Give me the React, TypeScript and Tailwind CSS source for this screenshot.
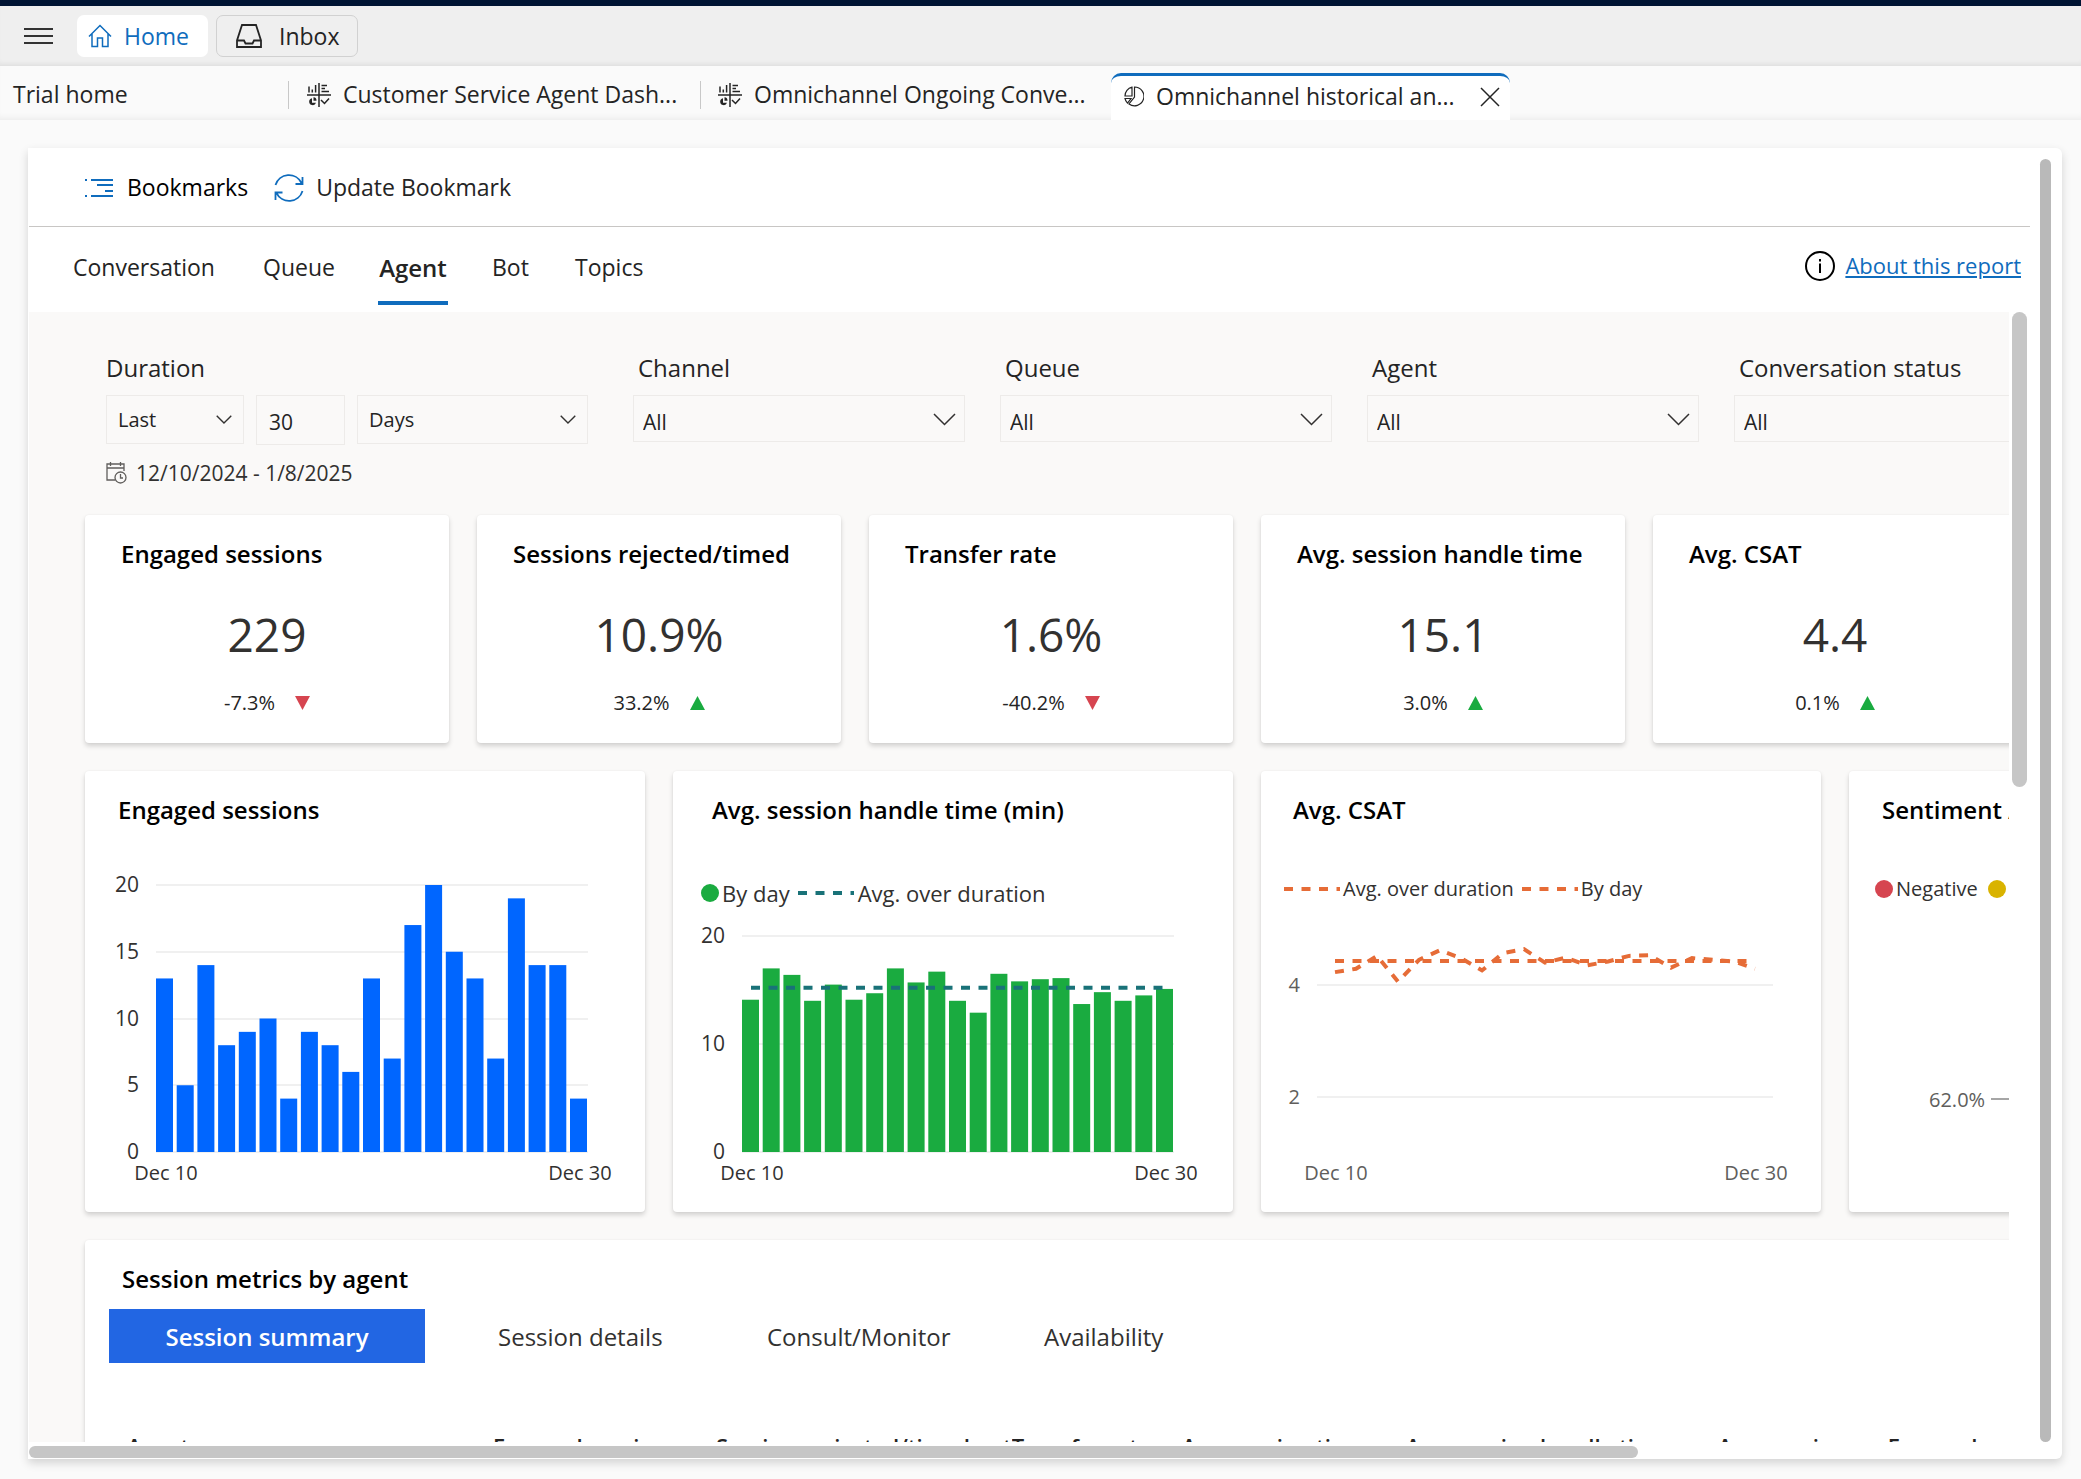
import { ReactNode } from 'react'

const sessionsPerDay = [13, 5, 14, 8, 9, 10, 4, 9, 8, 6, 13, 7, 17, 20, 15, 13, 7, 19, 14, 14, 4]
const handleTimePerDay = [
  14.1, 17, 16.4, 14, 15.5, 14.1, 14.7, 17, 15.7, 16.7, 14, 12.9, 16.5, 15.8, 16, 16.1, 13.7, 14.8, 14, 14.5, 15.1,
]
const csatPerDay = [
  4.23, 4.29, 4.52, 4.06, 4.45, 4.62, 4.48, 4.26, 4.57, 4.64, 4.4, 4.49, 4.35, 4.42, 4.52, 4.53, 4.31, 4.48, 4.45,
  4.42, 4.29,
]

const kpis = [
  { title: 'Engaged sessions', value: '229', delta: '-7.3%', up: false },
  { title: 'Sessions rejected/timed', value: '10.9%', delta: '33.2%', up: true },
  { title: 'Transfer rate', value: '1.6%', delta: '-40.2%', up: false },
  { title: 'Avg. session handle time', value: '15.1', delta: '3.0%', up: true },
  { title: 'Avg. CSAT', value: '4.4', delta: '0.1%', up: true },
]

const columns = [
  { label: 'Agent', width: 366 },
  { label: 'Engaged sessions', width: 223 },
  { label: 'Sessions rejected/timed out', width: 292 },
  { label: 'Transfer rate', width: 170 },
  { label: 'Avg. session time', width: 224 },
  { label: 'Avg. session handle time', width: 312 },
  { label: 'Avg. session', width: 170 },
  { label: 'Engaged', width: 200 },
]

function HomeIcon() {
  return (
    <svg width="24" height="24" viewBox="0 0 24 24" fill="none" stroke="#0f6cbd" strokeWidth="1.5">
      <path d="M1 12.5 12 1.5l11 11M4 10v12.5h5.5V14h5v8.500H20V10" />
    </svg>
  )
}

function InboxIcon() {
  return (
    <svg width="26" height="24" viewBox="0 0 26 24" fill="none" stroke="#242424" strokeWidth="1.8">
      <path d="M6 1h14l5 15.500V23H1v-6.500L6 1ZM1 16.500h7l1.500 3h7l1.500-3h7" />
    </svg>
  )
}

function DashboardIcon() {
  return (
    <svg width="24" height="24" viewBox="0 0 24 24" fill="none" stroke="#242424" strokeWidth="1.5">
      <path d="M12 0v24M0 12h24" />
      <path d="M2 9.500V3.500M5.300 9.500v-3M8.600 9.500V2M14.500 2.500H20M14.500 5.500h3.500M14.500 8.500H22" />
      <path d="M5 15.200a3.500 3.500 0 1 0 4 4.500H5v-4.500Z" fill="#242424" stroke="none" />
      <path d="M6.500 14.200a3.400 3.400 0 0 1 3 3.600h-3v-3.600Z" fill="#242424" stroke="none" />
      <path d="m14 17 3.500 3.500 4.500-5" />
    </svg>
  )
}

function PieIcon() {
  return (
    <svg width="20" height="21" viewBox="0 0 20 21" fill="none" stroke="#242424" strokeWidth="1.2">
      <path d="M8 1.2A9 9 0 0 0 1 10h7V1.2ZM10.500 1a9.400 9.400 0 1 1-5.500 17l5.500-7V1ZM1 12.500h6L3.500 17A9 9 0 0 1 1 12.500Z" />
    </svg>
  )
}

function BookmarksIcon() {
  return (
    <svg width="28" height="20" viewBox="0 0 28 20" fill="none" stroke="#0f6cbd" strokeWidth="2">
      <path d="M0 2h2M6 2h22M12 7h16M20 13h8M0 18h2M6 18h22" />
    </svg>
  )
}

function RefreshIcon() {
  return (
    <svg width="30" height="30" viewBox="0 0 30 30" fill="none" stroke="#0f6cbd" strokeWidth="1.8">
      <path d="M1.500 12A14 14 0 0 1 27.500 10M28.500 4v7h-7M28.500 18A14 14 0 0 1 2.500 20M1.500 27v-7.500h7" />
    </svg>
  )
}

function CalendarIcon() {
  return (
    <svg width="21" height="22" viewBox="0 0 21 22" fill="none" stroke="#605e5c" strokeWidth="1.3">
      <path d="M9 18H1V2h17v7M1 6h17M4.500 0v4M14.500 0v4" />
      <circle cx="14.500" cy="15.500" r="5.500" />
      <path d="M14.500 12v4H17" />
    </svg>
  )
}

function InfoIcon() {
  return (
    <svg width="30" height="30" viewBox="0 0 30 30" fill="none" stroke="#000" strokeWidth="2">
      <circle cx="15" cy="15" r="14" />
      <path d="M15 12.500v9.500M15 8v2.500" />
    </svg>
  )
}

function Triangle({ up }: { up: boolean }) {
  return (
    <svg width="15" height="14" viewBox="0 0 15 14">
      {up ? <path d="M0 14h15L7.500 0Z" fill="#1aab40" /> : <path d="M0 0h15L7.500 14Z" fill="#d64550" />}
    </svg>
  )
}

function Dashes({ color }: { color: string }) {
  return (
    <svg width="56" height="4" viewBox="0 0 56 4">
      <path d="M0 2h56" stroke={color} strokeWidth="4" strokeDasharray="9 8.500" />
    </svg>
  )
}

interface PickerProps {
  id: string
  value: string
  label?: string
  small?: boolean
  className: string
}

function Picker({ id, value, label, small, className }: PickerProps) {
  return (
    <div className={className}>
      <div className="relative">
        <select
          id={id}
          aria-label={label}
          className={
            small
              ? 'block h-[49px] w-full appearance-none border border-[#edebe9] bg-transparent pt-px pl-[11px] text-[20px] outline-none'
              : 'block h-[47px] w-full appearance-none border border-[#edebe9] bg-transparent pt-2 pl-[9px] text-[21px] outline-none'
          }
        >
          <option>{value}</option>
        </select>
        <svg
          className={small ? 'pointer-events-none absolute top-5 right-3' : 'pointer-events-none absolute top-[18px] right-[9px]'}
          width={small ? 16 : 23}
          height={small ? 9 : 13}
          viewBox="0 0 23 13"
          fill="none"
          stroke="#323130"
          strokeWidth={small ? 2 : 1.5}
        >
          <path d="m1 1 10.500 10.500L22 1" />
        </svg>
      </div>
    </div>
  )
}

function Filter({ id, label }: { id: string; label: string }) {
  return (
    <div className="w-[332px] shrink-0">
      <label htmlFor={id} className="block h-[43px] pl-[5px] text-[24px] leading-8">
        {label}
      </label>
      <Picker id={id} value="All" className="w-full" />
    </div>
  )
}

function Card({ title, className, children }: { title: string; className: string; children: ReactNode }) {
  return (
    <section
      className={`shrink-0 overflow-hidden rounded-[4px] bg-white shadow-[0_3px_5px_rgba(0,0,0,0.16),0_0_2px_rgba(0,0,0,0.06)] ${className}`}
    >
      <h3 className="text-[24px] leading-8 font-semibold whitespace-nowrap text-black">{title}</h3>
      {children}
    </section>
  )
}

interface BarChartProps {
  values: number[]
  ticks: number[]
  color: string
  left: number
  top: number
  height: number
  average?: number
}

function BarChart({ values, ticks, color, left, top, height, average }: BarChartProps) {
  const base = height - 60
  const y = (v: number) => base - (v / 20) * (base - top)
  return (
    <svg className="block" width="560" height={height} fontSize="21" fill="#323130">
      {ticks.map((t) => (
        <g key={t}>
          <path d={`M${left} ${Math.round(y(t))}h432`} stroke="#f0f0f0" strokeWidth="2" />
          <text x={left - 17} y={y(t) + 7} textAnchor="end">
            {t}
          </text>
        </g>
      ))}
      {values.map((v, i) => (
        <rect key={i} x={left + i * 20.7} y={y(v)} width="17" height={base - y(v)} fill={color} />
      ))}
      {average && (
        <path d={`M${left + 9} ${y(average)}h412`} stroke="#197278" strokeWidth="4" strokeDasharray="9 8.500" />
      )}
      <text x={left + 10} y={base + 28} fontSize="20" textAnchor="middle">
        Dec 10
      </text>
      <text x={left + 424} y={base + 28} fontSize="20" textAnchor="middle">
        Dec 30
      </text>
    </svg>
  )
}

function CsatChart() {
  const y = (v: number) => 82 + (4 - v) * 56
  const line = csatPerDay.map((v, i) => `${74 + i * 21},${y(v)}`).join(' ')
  return (
    <svg className="block" width="560" height="309" fontSize="20" fill="#605e5c">
      {[4, 2].map((t) => (
        <g key={t}>
          <path d={`M56 ${y(t)}h456`} stroke="#f0f0f0" strokeWidth="2" />
          <text x="39" y={y(t) + 7} textAnchor="end">
            {t}
          </text>
        </g>
      ))}
      <g fill="none" stroke="#e66c37" strokeWidth="4" strokeDasharray="9 8.500">
        <path d={`M74 ${y(4.43)}h412`} />
        <polyline points={line} />
      </g>
      <text x="75" y="277" textAnchor="middle">
        Dec 10
      </text>
      <text x="495" y="277" textAnchor="middle">
        Dec 30
      </text>
    </svg>
  )
}

function ChromeTab({ children, divided }: { children: ReactNode; divided?: boolean }) {
  return (
    <>
      {divided && <span className="h-7 w-px bg-[#c8c8c8]" />}
      <button className="flex items-center gap-3 text-[23px] whitespace-nowrap">{children}</button>
    </>
  )
}

export default function App() {
  return (
    <div className="flex h-screen flex-col overflow-hidden bg-[#fafafa] font-['Open_Sans','Noto_Sans',sans-serif] text-[#242424]">
      <div className="h-[6px] shrink-0 bg-[#001433]" />

      <header className="flex h-[60px] shrink-0 items-center bg-[#efefef] pb-px pl-6 shadow-[inset_0_-5px_5px_-3px_rgba(0,0,0,0.07)]">
        <button aria-label="Menu" className="flex w-[29px] flex-col gap-[5px]">
          <span className="h-[2px] bg-[#333]" />
          <span className="h-[2px] bg-[#333]" />
          <span className="h-[2px] bg-[#333]" />
        </button>
        <button className="ml-6 flex h-[42px] w-[131px] items-center gap-3 rounded-[7px] bg-white pt-px pl-[11px] text-[23px] text-[#0f6cbd]">
          <HomeIcon />
          Home
        </button>
        <button className="ml-2 flex h-[42px] w-[142px] items-center gap-[17px] rounded-[7px] border border-[#d1d1d1] pt-px pl-[19px] text-[23px]">
          <InboxIcon />
          Inbox
        </button>
      </header>

      <nav className="flex h-[54px] shrink-0 items-center bg-[#fafafa] pl-[13px] shadow-[inset_0_-6px_6px_-4px_rgba(0,0,0,0.06)]">
        <div className="w-[275px] shrink-0 pt-[3px]">
          <ChromeTab>Trial home</ChromeTab>
        </div>
        <div className="flex w-[412px] shrink-0 items-center gap-[18px] pt-[3px]">
          <ChromeTab divided>
            <DashboardIcon />
            Customer Service Agent Dash...
          </ChromeTab>
        </div>
        <div className="flex w-[411px] shrink-0 items-center gap-[17px] pt-[3px]">
          <ChromeTab divided>
            <DashboardIcon />
            Omnichannel Ongoing Conve...
          </ChromeTab>
        </div>
        <div className="flex h-[47px] w-[399px] shrink-0 items-center justify-between self-end rounded-t-[10px] border-t-[3px] border-[#0f6cbd] bg-white pr-[10px] pb-[3px] pl-[13px]">
          <button className="flex items-center gap-3 text-[23px] whitespace-nowrap">
            <PieIcon />
            Omnichannel historical an...
          </button>
          <button aria-label="Close tab">
            <svg width="20" height="20" viewBox="0 0 20 20" stroke="#242424" strokeWidth="1.500">
              <path d="m1 1 18 18M19 1 1 19" />
            </svg>
          </button>
        </div>
      </nav>

      <main className="mt-7 mr-[19px] mb-5 ml-7 flex min-h-0 flex-1 rounded-r-[6px] bg-white pr-[11px] pl-px shadow-[0_4px_10px_rgba(0,0,0,0.16)]">
        <div className="flex min-w-0 flex-1 flex-col">
          <div className="flex h-[79px] shrink-0 items-center border-b border-[#c8c6c4] pt-px pl-14 text-[23px]">
            <button className="flex items-center gap-[14px] text-black">
              <BookmarksIcon />
              Bookmarks
            </button>
            <button className="ml-[26px] flex items-center gap-3">
              <RefreshIcon />
              Update Bookmark
            </button>
          </div>

          <div className="flex h-[85px] shrink-0 items-center justify-between pr-[9px] pl-11">
            <div className="flex items-center text-[23px]">
              <button className="w-[190px] pb-1 text-left">Conversation</button>
              <button className="w-[115px] pb-1 text-left">Queue</button>
              <button className="mr-11 h-[70px] w-[70px] border-b-4 border-[#0f6cbd] text-center text-[24px] font-semibold">
                Agent
              </button>
              <button className="w-[83px] pb-1 text-left">Bot</button>
              <button className="pb-1">Topics</button>
            </div>
            <div className="flex items-center gap-[10px] pb-2">
              <InfoIcon />
              <a href="#about" className="text-[22px] text-[#0f6cbd] underline">
                About this report
              </a>
            </div>
          </div>

          <div className="flex min-h-0 flex-1 pr-[3px]">
            <div className="min-w-0 flex-1 overflow-hidden bg-[#faf9f8] pl-14">
              <div className="flex h-[203px] pt-10 pl-[21px]">
                <fieldset className="w-[527px] shrink-0">
                  <legend className="block h-[43px] text-[24px] leading-8">Duration</legend>
                  <div className="flex gap-3">
                    <Picker id="range" label="Range" value="Last" small className="w-[138px]" />
                    <input
                      aria-label="Amount"
                      defaultValue="30"
                      className="h-[50px] w-[89px] border border-[#edebe9] bg-transparent pt-[3px] pl-3 text-[21px] outline-none"
                    />
                    <Picker id="unit" label="Unit" value="Days" small className="w-[231px]" />
                  </div>
                  <p className="mt-3 flex items-center gap-[9px] text-[21px] leading-8 text-[#323130]">
                    <CalendarIcon />
                    12/10/2024 - 1/8/2025
                  </p>
                </fieldset>
                <div className="flex gap-[35px]">
                  <Filter id="channel" label="Channel" />
                  <Filter id="queue" label="Queue" />
                  <Filter id="agent" label="Agent" />
                  <Filter id="status" label="Conversation status" />
                </div>
              </div>

              <div className="flex gap-7">
                {kpis.map((k) => (
                  <Card key={k.title} title={k.title} className="h-[228px] w-[364px] pt-[23px] [&>h3]:pl-9">
                    <p className="mt-[34px] text-center text-[46px] leading-[60px] text-[#323130]">{k.value}</p>
                    <p className="mt-[23px] flex items-center justify-center gap-5 text-[20px] leading-8">
                      {k.delta}
                      <Triangle up={k.up} />
                    </p>
                  </Card>
                ))}
              </div>

              <div className="mt-7 flex gap-7">
                <Card title="Engaged sessions" className="h-[441px] w-[560px] pt-[23px] [&>h3]:pl-[33px]">
                  <BarChart
                    values={sessionsPerDay}
                    ticks={[20, 15, 10, 5, 0]}
                    color="#0066ff"
                    left={71}
                    top={59}
                    height={386}
                  />
                </Card>
                <Card title="Avg. session handle time (min)" className="h-[441px] w-[560px] pt-[23px] [&>h3]:pl-[39px]">
                  <div className="mt-[53px] flex h-7 items-center pl-7 text-[22px] text-[#323130]">
                    <span className="mr-[3px] size-[18px] rounded-full bg-[#1aab40]" />
                    By day
                    <span className="mr-1 ml-2">
                      <Dashes color="#197278" />
                    </span>
                    Avg. over duration
                  </div>
                  <BarChart
                    values={handleTimePerDay}
                    ticks={[20, 10, 0]}
                    color="#1aab40"
                    left={69}
                    top={29}
                    height={305}
                    average={15.2}
                  />
                </Card>
                <Card title="Avg. CSAT" className="h-[441px] w-[560px] pt-[23px] [&>h3]:pl-8">
                  <div className="mt-[49px] flex h-7 items-center pl-[23px] text-[20px] text-[#323130]">
                    <Dashes color="#e66c37" />
                    <span className="mr-2 ml-[3px]">Avg. over duration</span>
                    <Dashes color="#e66c37" />
                    <span className="ml-[3px]">By day</span>
                  </div>
                  <CsatChart />
                </Card>
                <Card title="Sentiment Analysis" className="h-[441px] w-[560px] pt-[23px] [&>h3]:pl-[33px]">
                  <div className="mt-[49px] flex h-7 items-center pl-[26px] text-[20px] text-[#323130]">
                    <span className="mr-[3px] size-[18px] rounded-full bg-[#d64550]" />
                    Negative
                    <span className="mr-1 ml-[10px] size-[18px] rounded-full bg-[#d9b300]" />
                    Neutral
                  </div>
                  <svg className="block" width="560" height="309" fontSize="20" fill="#605e5c">
                    <text x="80" y="204">
                      62.0%
                    </text>
                    <path d="M142 196h30" stroke="#a6a6a6" strokeWidth="2" />
                  </svg>
                </Card>
              </div>

              <Card title="Session metrics by agent" className="mt-7 w-[2400px] pt-[23px] [&>h3]:pl-[37px]">
                <div className="mt-[14px] flex h-[54px] items-center pl-6 text-[24px] text-[#323130]">
                  <button className="h-full w-[316px] bg-[#2266e3] pt-[2px] font-semibold text-white">Session summary</button>
                  <button className="ml-[73px] w-[269px] pt-[2px] text-left">Session details</button>
                  <button className="w-[277px] pt-[2px] text-left">Consult/Monitor</button>
                  <button className="pt-[2px]">Availability</button>
                </div>
                <table className="mt-[67px] ml-[42px] table-fixed text-left text-[22px] leading-8">
                  <thead>
                    <tr>
                      {columns.map((c) => (
                        <th key={c.label} className="overflow-hidden font-semibold whitespace-nowrap" style={{ width: c.width }}>
                          {c.label}
                        </th>
                      ))}
                    </tr>
                  </thead>
                </table>
              </Card>
            </div>
            <div className="ml-[3px] h-[42%] w-[15px] rounded-full bg-[#c6c6c6]" />
          </div>

          <div className="shrink-0 pt-1 pb-px">
            <div className="h-3 w-[80.4%] rounded-[6px] bg-[#c6c6c6]" />
          </div>
        </div>
        <div className="mt-[11px] mb-[17px] ml-[10px] w-[11px] rounded-full bg-[#b9b9b9]" />
      </main>
    </div>
  )
}
